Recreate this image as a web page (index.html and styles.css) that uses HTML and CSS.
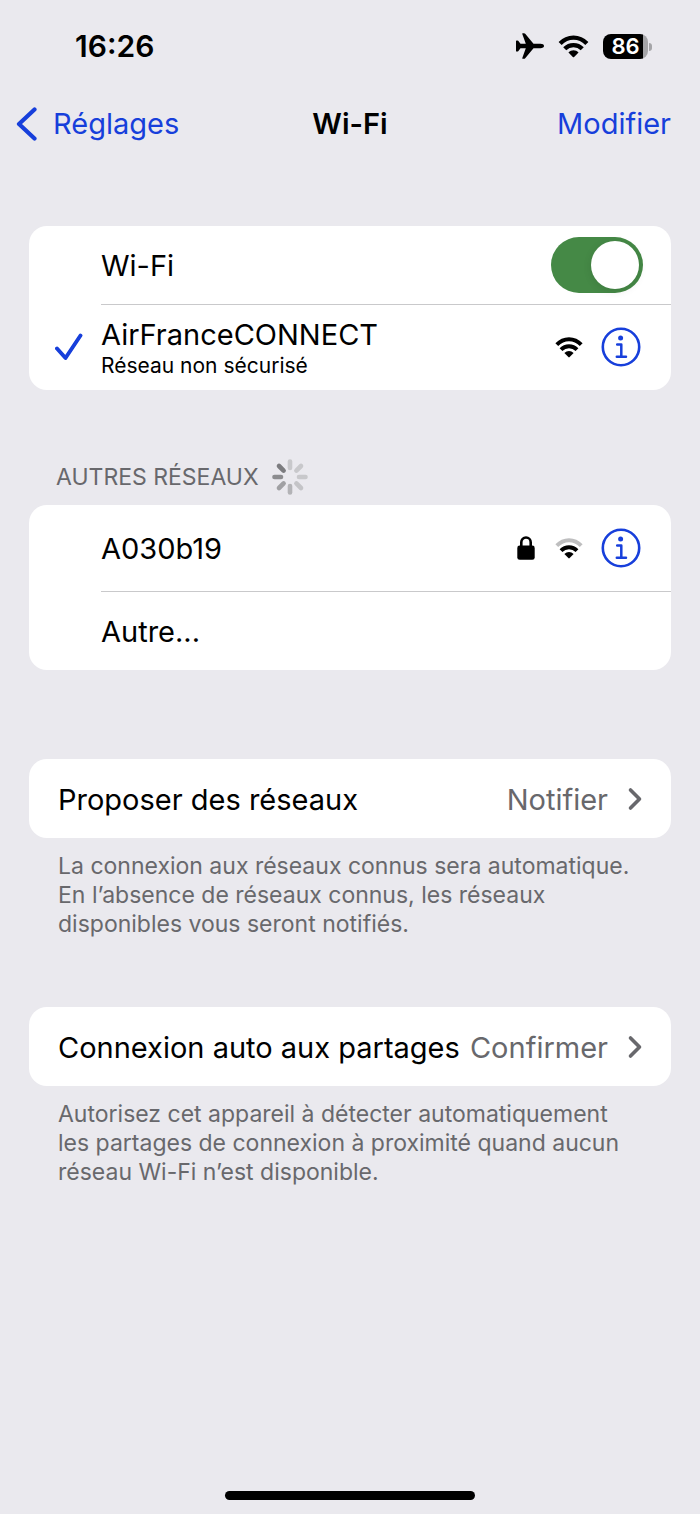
FILE: index.html
```html
<!DOCTYPE html>
<html lang="fr">
<head>
<meta charset="utf-8">
<meta name="viewport" content="width=device-width, initial-scale=1">
<title>Wi-Fi</title>
<link rel="stylesheet" href="styles.css">
</head>
<body>
<svg class="defs" aria-hidden="true">
  <symbol id="info" viewBox="0 0 40 40">
    <circle cx="20" cy="20" r="18.2" fill="none" stroke="currentColor" stroke-width="2.6"/>
    <circle cx="19.6" cy="11" r="2.5" fill="currentColor"/>
    <path d="M16.2 17.4H20.3V29.6M15.8 29.8H25" fill="none" stroke="currentColor" stroke-width="2.5" stroke-linecap="round" stroke-linejoin="round"/>
  </symbol>
  <symbol id="wifi-outer" viewBox="0 0 28 21">
    <path d="M1.8 7.7C8.600 .5 19.400 .5 26.200 7.700" fill="none" stroke="currentColor" stroke-width="3.900"/>
  </symbol>
  <symbol id="wifi-inner" viewBox="0 0 28 21">
    <path d="M6 12.600C10.400 8.100 17.600 8.100 22 12.600" fill="none" stroke="currentColor" stroke-width="3.900"/>
    <path d="M9.400 16C12 13.300 16 13.300 18.600 16L14.600 20.100Q14 20.700 13.400 20.100Z" fill="currentColor"/>
  </symbol>
  <symbol id="chevron" viewBox="0 0 16 24">
    <path d="M3.500 3L12.500 12L3.500 21" fill="none" stroke="currentColor" stroke-width="3.600" stroke-linecap="round" stroke-linejoin="round"/>
  </symbol>
</svg>

<div class="screen">
  <div class="status">
    <time class="clock">16:26</time>
    <div class="status-icons">
      <svg class="plane" viewBox="0 0 28 26" aria-label="Mode avion"><path d="M28 13C28 11.600 26.500 10.800 24.500 10.800H17.500L9.200 .7Q8.800 .2 8 .2H6.700Q6 .2 6.300 1L9.800 10.800H4.500L2.200 7.800Q1.900 7.400 1.300 7.400H.7Q0 7.400 0 8.100V17.900Q0 18.600 .7 18.600H1.300Q1.900 18.600 2.200 18.200L4.500 15.200H9.800L6.300 25Q6 25.800 6.700 25.800H8Q8.800 25.800 9.200 25.300L17.500 15.200H24.500C26.500 15.200 28 14.400 28 13Z"/></svg>
      <svg class="wifi-status" viewBox="0 0 28 21" aria-label="Wi-Fi"><use href="#wifi-outer"/><use href="#wifi-inner"/></svg>
      <div class="battery"><span class="battery-level">86</span></div>
    </div>
  </div>

  <header class="nav">
    <a class="back" href="#"><svg class="back-icon" viewBox="0 0 22 34" aria-hidden="true"><path d="M18.500 2.500L3 17L18.500 31.500" fill="none" stroke="currentColor" stroke-width="4.200" stroke-linecap="round" stroke-linejoin="round"/></svg>Réglages</a>
    <h1 class="title">Wi-Fi</h1>
    <button class="edit" type="button">Modifier</button>
  </header>

  <main class="content">
    <section class="card">
      <div class="row inset first">
        <label class="name" for="wifi">Wi-Fi</label>
        <input class="switch" id="wifi" type="checkbox" role="switch" checked>
      </div>
      <div class="row inset tall line">
        <svg class="check" viewBox="0 0 28 28" aria-label="Connecté"><path d="M2 15.500L10.500 25L25.500 2.500" fill="none" stroke="currentColor" stroke-width="3.900" stroke-linecap="round" stroke-linejoin="round"/></svg>
        <div class="name">AirFranceCONNECT<small class="detail">Réseau non sécurisé</small></div>
        <svg class="wifi" viewBox="0 0 28 21" aria-hidden="true"><use href="#wifi-outer"/><use href="#wifi-inner"/></svg>
        <button class="info" type="button" aria-label="Informations sur AirFranceCONNECT"><svg class="info-icon"><use href="#info"/></svg></button>
      </div>
    </section>

    <div class="group-head">
      <h2 class="group-title">AUTRES RÉSEAUX</h2>
      <svg class="spinner" viewBox="-18 -18 36 36" aria-hidden="true" fill="none" stroke-width="4.600" stroke-linecap="round">
        <path d="M0-9V-15.500" stroke="#c8c8cb"/>
        <path d="M6.400-6.400L11-11" stroke="#c8c8cb"/>
        <path d="M9 0H15.500" stroke="#c8c8cb"/>
        <path d="M6.400 6.400L11 11" stroke="#c4c4c7"/>
        <path d="M0 9V15.500" stroke="#b3b3b6"/>
        <path d="M-6.400 6.400L-11 11" stroke="#a0a0a3"/>
        <path d="M-9 0H-15.500" stroke="#8c8c8f"/>
        <path d="M-6.400-6.400L-11-11" stroke="#7c7c7f"/>
      </svg>
    </div>
    <section class="card">
      <div class="row inset tall">
        <div class="name">A030b19</div>
        <svg class="lock" viewBox="0 0 18 24" aria-label="Sécurisé"><path d="M4.300 11V6.200a4.700 4.700 0 0 1 9.400 0V11" fill="none" stroke="currentColor" stroke-width="2.600"/><rect x=".3" y="9.600" width="17.400" height="14.200" rx="2.400" fill="currentColor"/></svg>
        <svg class="wifi" viewBox="0 0 28 21" aria-hidden="true"><use class="faint" href="#wifi-outer"/><use href="#wifi-inner"/></svg>
        <button class="info" type="button" aria-label="Informations sur A030b19"><svg class="info-icon"><use href="#info"/></svg></button>
      </div>
      <button class="row inset line" type="button"><span class="name">Autre...</span></button>
    </section>

    <section class="card spaced">
      <button class="row" type="button"><span class="name">Proposer des réseaux</span><span class="value">Notifier</span><svg class="chevron"><use href="#chevron"/></svg></button>
    </section>
    <p class="note">La connexion aux réseaux connus sera automatique. En l’absence de réseaux connus, les réseaux disponibles vous seront notifiés.</p>

    <section class="card">
      <button class="row" type="button"><span class="name">Connexion auto aux partages</span><span class="value">Confirmer</span><svg class="chevron"><use href="#chevron"/></svg></button>
    </section>
    <p class="note">Autorisez cet appareil à détecter automatiquement les partages de connexion à proximité quand aucun réseau Wi-Fi n’est disponible.</p>
  </main>
  <div class="home-bar"></div>
</div>
</body>
</html>
```

FILE: styles.css
```css
* { box-sizing: border-box; }
body {
  margin: 0;
  background: #eae9ee;
  color: #000;
  font: 29px/36px Inter, "Liberation Sans", sans-serif;
}
button {
  margin: 0;
  padding: 0;
  border: 0;
  background: none;
  color: inherit;
  font: inherit;
  text-align: left;
}
svg { flex: none; display: block; }
.defs { position: absolute; width: 0; height: 0; }
.screen {
  min-height: 100vh;
  display: flex;
  flex-direction: column;
}

.status {
  display: flex;
  justify-content: space-between;
  align-items: center;
  height: 92px;
  padding: 0 48px 0 75px;
}
.clock { font-size: 30px; font-weight: 600; }
.status-icons { display: flex; align-items: center; gap: 14px; }
.plane { width: 28px; height: 26px; }
.wifi-status { width: 31px; height: 23px; }
.battery {
  position: relative;
  width: 45px;
  height: 25px;
  margin-right: 4px;
  border-radius: 8px;
  background: linear-gradient(90deg, #000 88%, #a5a5a8 88%);
  color: #fff;
  text-align: center;
}
.battery::after {
  content: "";
  position: absolute;
  left: 100%;
  top: 9px;
  width: 3px;
  height: 8px;
  margin-left: 1px;
  border-radius: 0 4px 4px 0;
  background: #a5a5a8;
}
.battery-level { display: block; font-size: 22px; line-height: 25px; font-weight: 600; }

.nav {
  display: grid;
  grid-template-columns: 1fr auto 1fr;
  align-items: center;
  height: 64px;
  padding: 0 29px;
}
.back {
  display: flex;
  align-items: center;
  gap: 15px;
  margin-left: -13px;
  color: #173fdb;
  text-decoration: none;
}
.back-icon { width: 22px; height: 34px; }
.title { margin: 0; font-size: 29px; line-height: 36px; font-weight: 600; }
.edit { justify-self: end; color: #173fdb; }

.content { flex: 1; padding: 70px 29px 0; }
.card { border-radius: 18px; background: #fff; overflow: hidden; }
.spaced { margin-top: 89px; }
.row {
  position: relative;
  display: flex;
  align-items: center;
  width: 100%;
  min-height: 79px;
  padding: 0 28px 0 29px;
}
.inset { padding-left: 72px; }
.first { min-height: 78px; }
.tall { min-height: 86px; padding-right: 30px; }
.line::before {
  content: "";
  position: absolute;
  top: 0;
  left: 72px;
  right: 0;
  height: 1px;
  background: #c9c9cb;
}
.name, .value { padding-top: 2px; }
.name { flex: 1; }
.detail { display: block; font-size: 21px; line-height: 26px; }
.switch {
  appearance: none;
  display: flex;
  justify-content: flex-end;
  width: 92px;
  height: 56px;
  margin: 0;
  padding: 4px;
  border-radius: 28px;
  background: #458946;
}
.switch::before {
  content: "";
  width: 48px;
  height: 48px;
  border-radius: 50%;
  background: #fff;
  box-shadow: 0 2px 8px rgb(0 0 0 / 10%);
}
.switch:not(:checked) { justify-content: flex-start; background: #d8d8dc; }
.check {
  position: absolute;
  left: 26px;
  width: 28px;
  height: 28px;
  color: #173fdb;
}
.wifi { width: 28px; height: 21px; margin-right: 18px; }
.faint { color: #bebebf; }
.lock { width: 18px; height: 24px; margin-right: 20px; }
.info { color: #173fdb; }
.info-icon { width: 40px; height: 40px; }
.value { color: #68686c; }
.chevron { width: 16px; height: 24px; margin-left: 19px; color: #68686c; }

.group-head {
  display: flex;
  align-items: center;
  gap: 13px;
  margin: 69px 0 10px;
  padding-left: 27px;
}
.group-title { margin: 0; color: #68686c; font-size: 23px; font-weight: 400; }
.spinner { width: 36px; height: 36px; }
.note {
  margin: 14px 0 68px;
  padding: 0 29px;
  color: #68686c;
  font-size: 23px;
  line-height: 29px;
}
.home-bar {
  width: 250px;
  height: 9px;
  margin: 0 auto 14px;
  border-radius: 5px;
  background: #000;
}
```
